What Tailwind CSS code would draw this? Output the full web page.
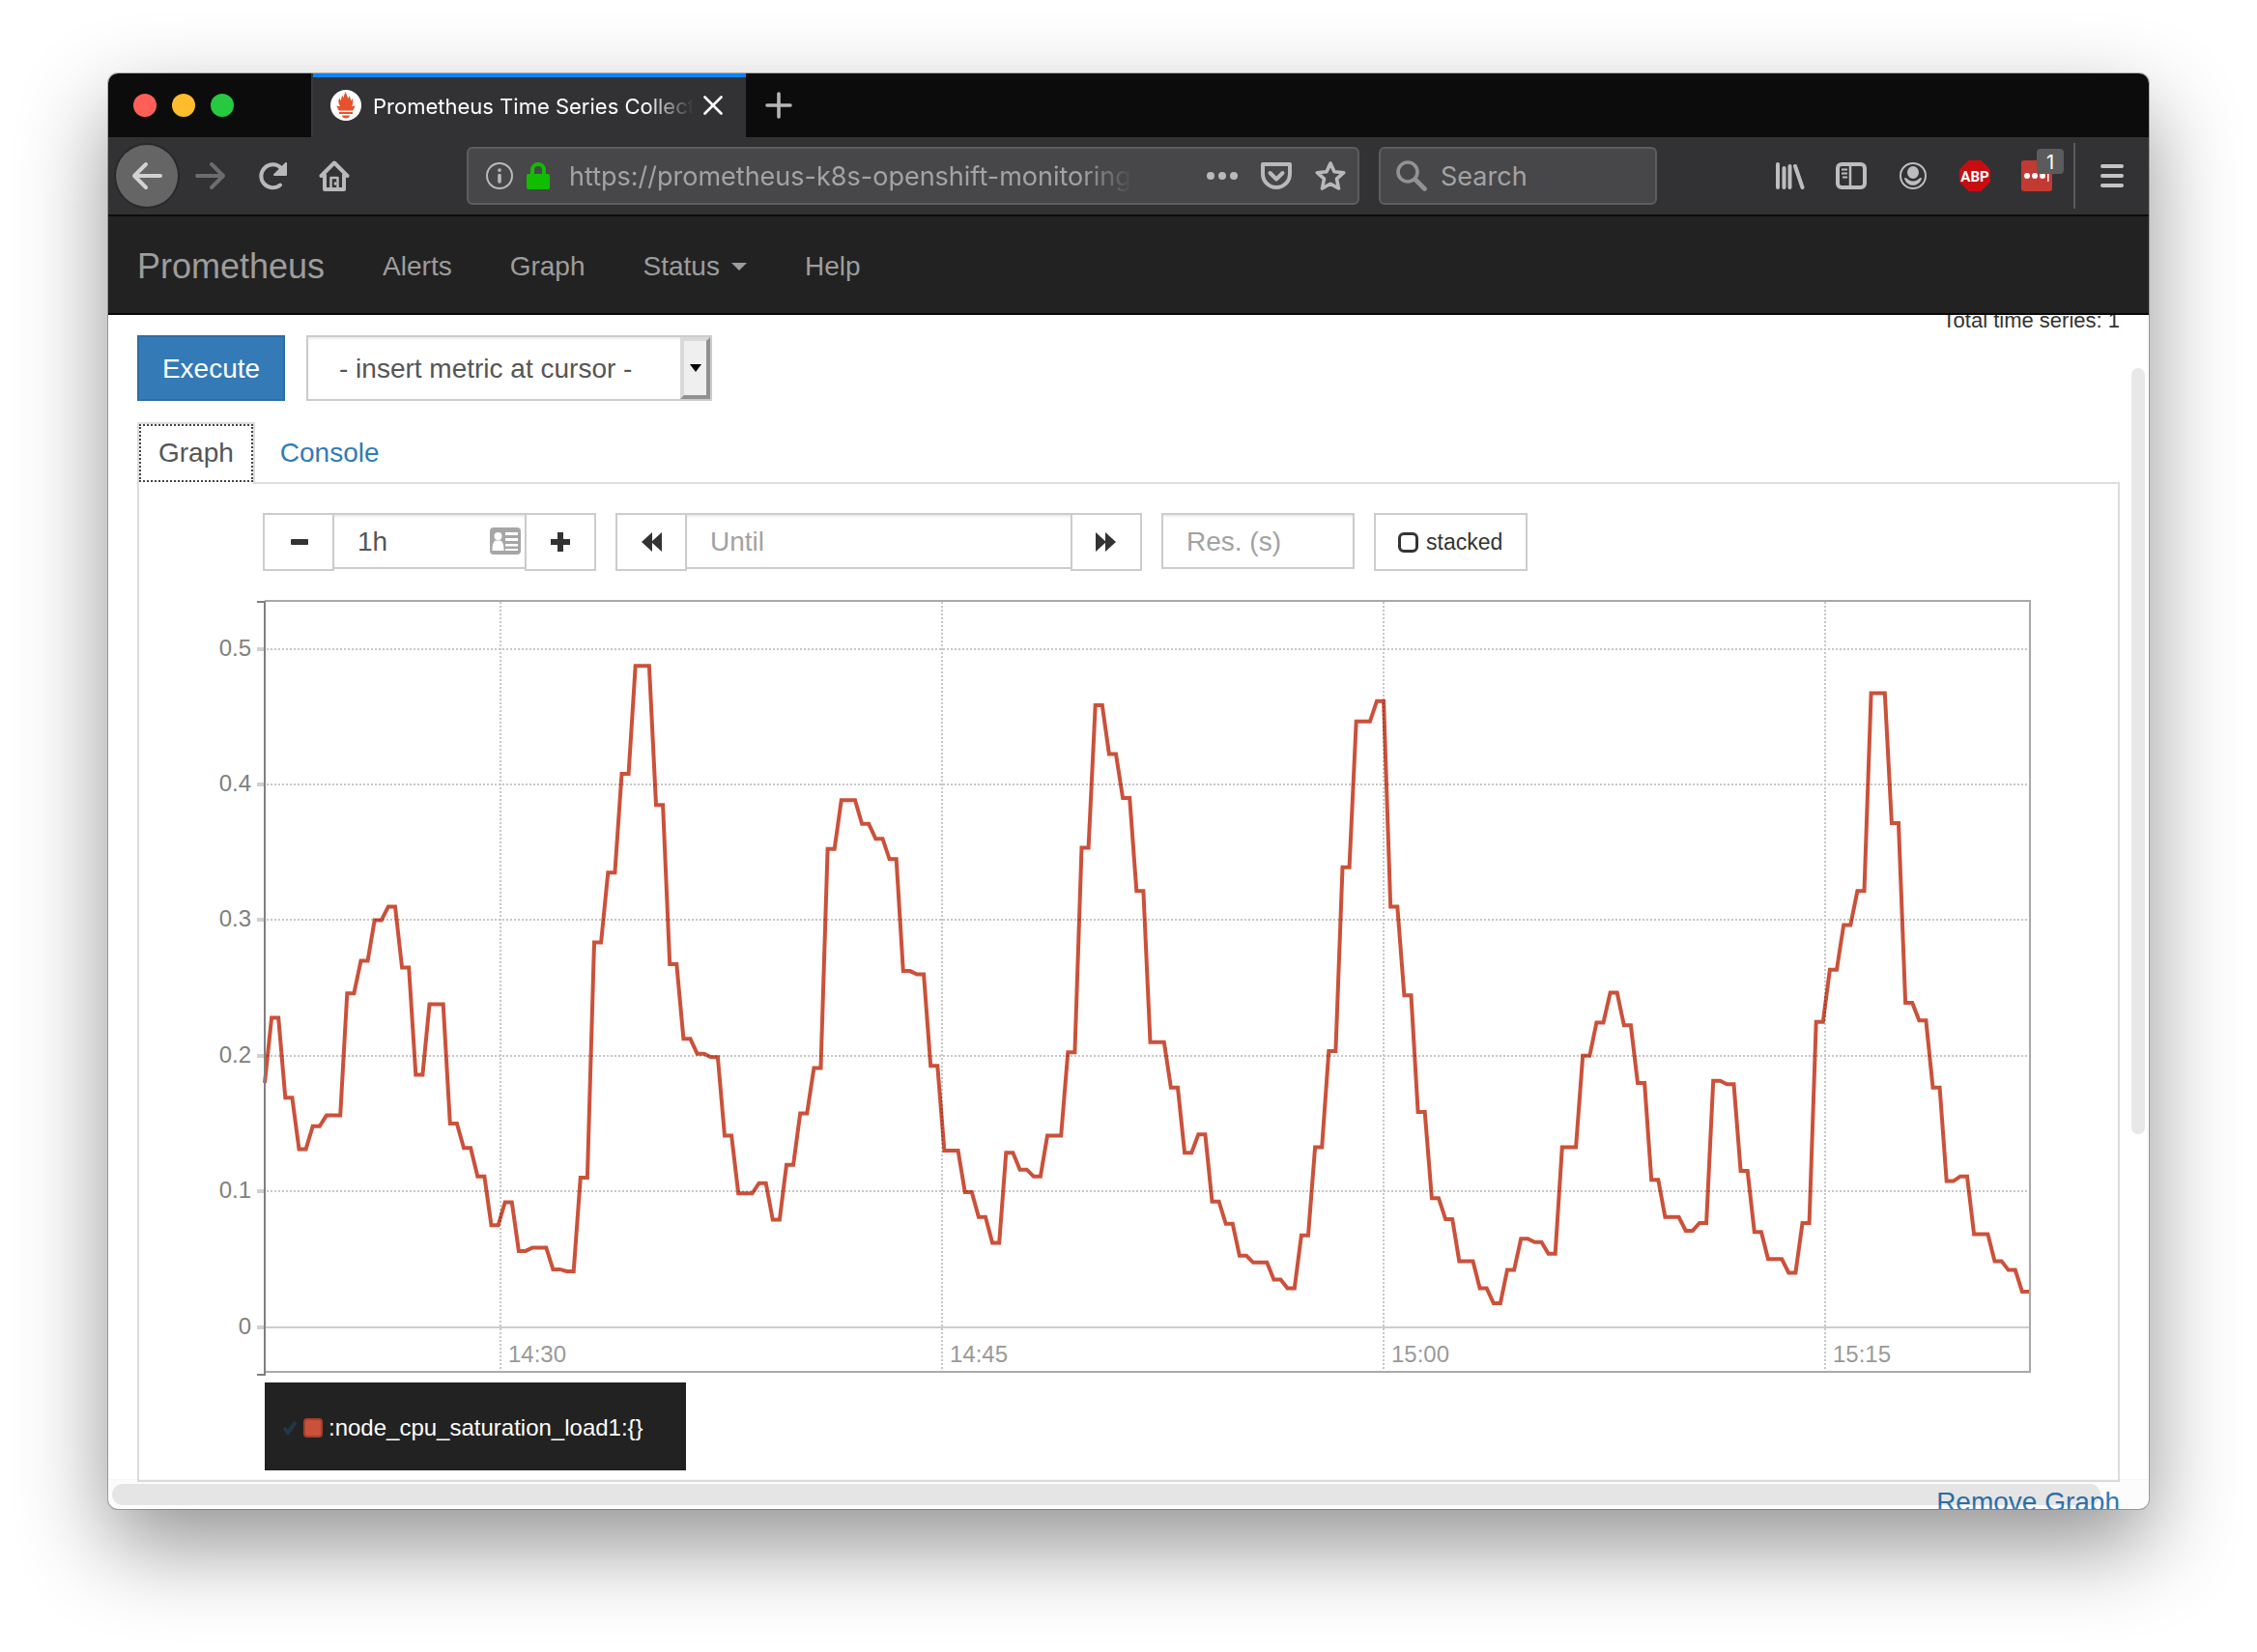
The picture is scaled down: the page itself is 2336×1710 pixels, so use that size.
<!DOCTYPE html>
<html lang="en">
<head>
<meta charset="utf-8">
<title>Prometheus Time Series Collection and Processing Server</title>
<script src="https://cdn.jsdelivr.net/npm/@tailwindcss/browser@4"></script>
</head>
<body class="bg-white overflow-hidden font-['Liberation_Sans',Arial,sans-serif] text-[28px] leading-[40px] text-[#333]">
<div class="px-28 pt-19 pb-37">
<div class="flex h-[calc(100vh-224px)] flex-col overflow-hidden rounded-[10px] bg-white shadow-[0_0_0_1px_rgba(0,0,0,0.25),0_37px_92px_rgba(0,0,0,0.43)]">

  <!-- Tab strip -->
  <div class="flex h-[66px] shrink-0 bg-[#0c0c0c] font-['Inter',sans-serif]">
    <div class="flex w-[210px] items-center gap-4 pl-[26px]">
      <button aria-label="Close window" class="size-6 rounded-full bg-[#ff5f57]"></button>
      <button aria-label="Minimize window" class="size-6 rounded-full bg-[#ffbd2e]"></button>
      <button aria-label="Zoom window" class="size-6 rounded-full bg-[#28c940]"></button>
    </div>
    <div class="flex w-[450px] items-center border-l-2 border-l-[#3a3a3c] bg-[#323234] pl-[18px] shadow-[inset_0_4px_0_#0a84ff]">
      <svg class="size-8 shrink-0" viewBox="0 0 32 32"><circle cx="16" cy="16" r="16" fill="#fff"/><path fill="#e6522c" d="M9 23h14v2H9zM12 26.5h8c0 2-2 3-4 3s-4-1-4-3zM9 21.6C7.500 20 7 18.300 6.300 16.500c1.700.4 2.700.5 3.700.6C8 14 7.700 10.800 9.500 8c.1 1.700.9 2.400 1.500 3.200.2-2.600.4-4 1.500-5.700.1 1.300.6 2.300 1 3 .3-2.600 1-4.500 2.500-6.500 0 3 2 4.700 2.300 7.200.6-.9.8-1.800.7-3C20.800 8 21 9.500 21.300 11.500c.6-.8.9-1.600.8-3 1.900 2.800 1.600 5.800-.1 8.600 1.200-.1 2.300-.3 3.700-.6-.6 1.800-1.400 3.500-2.900 5.100z"/></svg>
      <span class="ml-3 w-[332px] overflow-hidden pt-0.5 whitespace-nowrap text-[22px] leading-8 text-white [mask-image:linear-gradient(to_right,black_85%,transparent)]">Prometheus Time Series Collection</span>
      <button aria-label="Close tab" class="ml-2.5"><svg class="size-5" viewBox="0 0 20 20" stroke="#fff" stroke-width="2.600" stroke-linecap="round"><path d="M1.500 1.500l17 17M18.500 1.500l-17 17"/></svg></button>
    </div>
    <button aria-label="New tab" class="ml-5"><svg class="size-7" viewBox="0 0 28 28" stroke="#b6b6b6" stroke-width="3.600" stroke-linecap="round"><path d="M14 2v24M2 14h24"/></svg></button>
  </div>

  <!-- Toolbar -->
  <div class="flex h-[82px] shrink-0 items-center border-b-2 border-[#0c0c0d] bg-[#323234] pl-2 font-['Inter',sans-serif] text-[#b9b9ba]">
    <button aria-label="Back" class="mr-0.5 flex size-16 items-center justify-center rounded-full bg-[#656566] text-[#d2d2d2] ring-2 ring-[#29292b]"><svg class="size-8" viewBox="0 0 32 32" fill="none" stroke="currentColor" stroke-width="4" stroke-linecap="round" stroke-linejoin="round"><path d="M30 16H3M15 4L3 16l12 12"/></svg></button>
    <button aria-label="Forward" class="flex size-16 items-center justify-center text-[#6c6c6d]"><svg class="size-8" viewBox="0 0 32 32" fill="none" stroke="currentColor" stroke-width="4" stroke-linecap="round" stroke-linejoin="round"><path d="M2 16h27M17 4l12 12-12 12"/></svg></button>
    <button aria-label="Reload" class="flex size-16 items-center justify-center"><svg class="size-8" viewBox="0 0 32 32" fill="none" stroke="currentColor" stroke-width="4" stroke-linecap="round"><path d="M24 25.500A12 12 0 1 1 25 8"/><path fill="currentColor" stroke-width="2" stroke-linejoin="round" d="M30 3v12H18z"/></svg></button>
    <button aria-label="Home" class="flex size-16 items-center justify-center"><svg class="size-8" viewBox="0 0 32 32" fill="none" stroke="currentColor" stroke-width="4" stroke-linecap="round" stroke-linejoin="round"><path d="M2.500 16L16 2.500 29.500 16M6 15v15h20V15"/><path stroke-width="2.500" d="M12.500 29V18h7v11"/><path stroke-width="2.500" d="M17 23.500v1"/></svg></button>
    <div class="ml-[105px] flex h-[60px] min-w-0 flex-1 items-center rounded-md border-2 border-[#5d5d5f] bg-[#474749] pl-[18px]">
      <svg class="size-7 shrink-0" viewBox="0 0 28 28" fill="none" stroke="currentColor" stroke-width="2"><circle cx="14" cy="14" r="13"/><path stroke-width="3.600" stroke-linecap="round" d="M14 13.500V20M14 8v.2"/></svg>
      <svg class="ml-[14px] h-7 w-6 shrink-0" viewBox="0 0 24 28"><path fill="none" stroke="#12bc00" stroke-width="4" d="M6 13V8a6 6 0 0 1 12 0v5"/><rect y="12" width="24" height="16" rx="2" fill="#12bc00"/></svg>
      <input aria-label="Address" value="https://prometheus-k8s-openshift-monitoring.apps" class="ml-5 w-[590px] min-w-0 bg-transparent pt-0.5 text-[27px] leading-9 text-[#a3a3a4] outline-none [mask-image:linear-gradient(to_right,black_90%,transparent_99%)]">
      <div class="ml-auto flex">
        <button aria-label="Page actions" class="flex h-14 w-14 items-center justify-center"><svg class="size-8" viewBox="0 0 32 32" fill="currentColor"><circle cx="4" cy="16" r="4"/><circle cx="16" cy="16" r="4"/><circle cx="28" cy="16" r="4"/></svg></button>
        <button aria-label="Save to Pocket" class="flex h-14 w-14 items-center justify-center"><svg class="size-8" viewBox="0 0 32 32" fill="none" stroke="currentColor" stroke-width="4" stroke-linecap="round" stroke-linejoin="round"><path d="M2 4h28v10a14 14 0 0 1-28 0z"/><path d="M9.500 13l6.500 6.500 6.500-6.500"/></svg></button>
        <button aria-label="Bookmark this page" class="flex h-14 w-14 items-center justify-center"><svg class="size-8" viewBox="0 0 32 32" fill="none" stroke="currentColor" stroke-width="3.600" stroke-linejoin="round"><path d="M16 3l4 8.700 9.700 1-7.200 6.500L24.500 29 16 24.200 7.500 29l2-9.800-7.200-6.500 9.700-1z"/></svg></button>
      </div>
    </div>
    <label class="ml-5 flex h-[60px] w-[288px] items-center rounded-md border-2 border-[#5d5d5f] bg-[#474749] pl-4">
      <svg class="size-8 shrink-0 text-[#929293]" viewBox="0 0 32 32" fill="none" stroke="currentColor" stroke-width="3.600" stroke-linecap="round"><circle cx="12" cy="12" r="10"/><path stroke-width="4.600" d="M20 20l9.500 9.500"/></svg>
      <input type="search" placeholder="Search" aria-label="Search" class="ml-[14px] w-full min-w-0 bg-transparent pt-0.5 text-[27px] leading-9 outline-none placeholder:text-[#a3a3a4]">
    </label>
    <div class="ml-[105px] flex text-[#bdbdbe]">
      <button aria-label="Library" class="flex size-16 items-center justify-center"><svg class="size-8" viewBox="0 0 32 32" fill="none" stroke="currentColor" stroke-width="4" stroke-linecap="round"><path d="M4 4v24M10.500 8v20M16.500 6v22M22 6l7.500 22"/></svg></button>
      <button aria-label="Sidebars" class="flex size-16 items-center justify-center"><svg class="size-8" viewBox="0 0 32 32" fill="none" stroke="currentColor"><rect x="2" y="4" width="28" height="24" rx="4" stroke-width="4"/><path stroke-width="2.500" d="M15 4v24"/><path stroke-width="2" d="M6 9.500h6M6 13.500h6M7 17.500h5"/></svg></button>
      <button aria-label="Account" class="flex size-16 items-center justify-center"><svg class="size-8" viewBox="0 0 32 32" fill="currentColor"><circle cx="16" cy="16" r="13" fill="none" stroke="currentColor" stroke-width="2"/><ellipse cx="16" cy="12.500" rx="6" ry="6.500"/><path d="M7 18c2-.3 3 1 4.500 2.200 2.500 1.800 6.500 1.800 9 0C22 19 23 17.700 25 18c-.5 4.500-4.500 7.800-9 7.800S7.500 22.500 7 18z"/></svg></button>
      <button aria-label="Adblock Plus" class="flex size-16 items-center justify-center"><svg class="size-8" viewBox="0 0 32 32"><path fill="#c70d12" d="M9.500 0h13L32 9.500v13L22.500 32h-13L0 22.500v-13z"/><text x="16" y="22" text-anchor="middle" font-family="Roboto, sans-serif" font-weight="700" font-size="15" fill="#fff">ABP</text></svg></button>
      <button aria-label="Password manager" class="relative flex size-16 items-center justify-center"><svg class="size-8" viewBox="0 0 32 32"><rect width="32" height="32" rx="3" fill="#c23a32"/><g fill="#fff"><circle cx="6" cy="16" r="3"/><circle cx="14" cy="16" r="3"/><circle cx="22" cy="16" r="3"/><path d="M27 12h1.500v10H27z"/></g></svg><span class="absolute left-8 top-1 h-[26px] w-7 rounded-sm bg-[#5b5b5d] text-center text-[20px] leading-7 text-white">1</span></button>
    </div>
    <div class="ml-1.5 h-[68px] w-0.5 bg-[#5b5b5d]"></div>
    <button aria-label="Menu" class="mr-[26px] ml-[26px]"><svg class="size-6" viewBox="0 0 24 24" stroke="#c4c4c5" stroke-width="4" stroke-linecap="round"><path d="M2 2h20M2 12h20M2 22h20"/></svg></button>
  </div>

  <!-- Site navigation -->
  <nav class="flex h-[102px] shrink-0 items-center gap-[60px] border-b-2 border-[#080808] bg-[#222] px-[30px] pt-1 text-[#9d9d9d]">
    <a href="#" class="text-[36px]">Prometheus</a>
    <a href="#">Alerts</a>
    <a href="#">Graph</a>
    <a href="#" class="flex items-center gap-3">Status <svg class="h-2 w-4" viewBox="0 0 16 8" fill="currentColor"><path d="M0 0h16l-8 8z"/></svg></a>
    <a href="#">Help</a>
  </nav>

  <!-- Page -->
  <main class="relative min-h-0 flex-1 overflow-hidden px-[30px]">
    <div class="-mt-[9px] text-right text-[22px] leading-[30px]">Total time series: 1</div>
    <div class="flex gap-[22px]">
      <button class="h-[68px] w-[153px] border-2 border-[#2e6da4] bg-[#337ab7] pt-0.5 text-white">Execute</button>
      <div class="relative w-[420px]">
        <select aria-label="Insert metric" class="h-[68px] w-full appearance-none border-2 border-[#ccc] bg-white pt-0.5 pl-8 text-[#555] shadow-[inset_0_2px_2px_rgba(0,0,0,0.075)]"><option>- insert metric at cursor -</option></select>
        <div class="pointer-events-none absolute inset-y-0.5 right-0.5 flex w-[31px] items-center justify-center border-4 border-t-[#d9d9d9] border-r-[#919191] border-b-[#919191] border-l-[#d9d9d9] bg-[#efefef]"><svg class="h-2 w-3" viewBox="0 0 12 8"><path d="M0 0h12L6 8z"/></svg></div>
      </div>
    </div>

    <div class="mt-[22px] flex h-16 gap-1 border-b-2 border-[#ddd]">
      <a href="#" class="-mb-0.5 h-16 border-2 border-b-0 border-[#ddd] bg-white px-5 pt-2.5 text-[#555] outline-2 -outline-offset-4 outline-dotted outline-[#444]">Graph</a>
      <a href="#" class="px-[22px] pt-3 text-[#337ab7]">Console</a>
    </div>

    <div class="border-2 border-t-0 border-[#ddd] pt-[30px] pb-2.5">
      <div class="flex items-start gap-5 pl-32">
        <div class="flex items-start">
          <button aria-label="Shrink range" class="flex h-[60px] w-[74px] items-center justify-center border-2 border-[#ccc]"><svg class="size-6" viewBox="0 0 24 24"><rect x="4" y="9" width="18" height="6" rx="1" fill="#333"/></svg></button>
          <div class="relative -mx-0.5">
            <input aria-label="Range" value="1h" class="h-[58px] w-[201px] border-2 border-[#ccc] pt-0.5 pl-6 text-[#555] shadow-[inset_0_2px_2px_rgba(0,0,0,0.075)]">
            <svg class="absolute top-[15px] right-1.5 h-7 w-8" viewBox="0 0 32 28"><rect width="32" height="28" rx="4" fill="#a6a6a6"/><g fill="#fff"><circle cx="8.500" cy="9" r="4"/><path d="M2.500 24c0-6 1-9.500 3.500-10.500h5c2.500 1 3.500 4.500 3.500 10.500zM16 5h13v3H16zM16 11h13v3H16zM16 17h13v2.500H16zM16 22h13v2H16z"/></g></svg>
          </div>
          <button aria-label="Grow range" class="relative flex h-[60px] w-[74px] items-center justify-center border-2 border-[#ccc] bg-white"><svg class="size-6" viewBox="0 0 24 24" fill="#333"><path d="M9 2h6v7h7v6h-7v7H9v-7H2V9h7z"/></svg></button>
        </div>
        <div class="flex items-start">
          <button aria-label="Rewind end time" class="flex h-[60px] w-[74px] items-center justify-center border-2 border-[#ccc]"><svg class="size-6" viewBox="0 0 24 24" fill="#333"><path d="M13 2v20L2 12zM23 2v20L12 12z"/></svg></button>
          <input aria-label="Until" placeholder="Until" class="-mx-0.5 h-[58px] w-[401px] border-2 border-[#ccc] pt-0.5 pl-6 shadow-[inset_0_2px_2px_rgba(0,0,0,0.075)] placeholder:text-[#a2a2a2]">
          <button aria-label="Advance end time" class="relative flex h-[60px] w-[74px] items-center justify-center border-2 border-[#ccc] bg-white"><svg class="size-6" viewBox="0 0 24 24" fill="#333"><path d="M1 2v20l11-10zM11 2v20l11-10z"/></svg></button>
        </div>
        <input aria-label="Resolution in seconds" placeholder="Res. (s)" class="h-[58px] w-[200px] border-2 border-[#ccc] pt-0.5 pl-6 shadow-[inset_0_2px_2px_rgba(0,0,0,0.075)] placeholder:text-[#a2a2a2]">
        <label class="flex h-[60px] w-[159px] items-center gap-2 border-2 border-[#ccc] pl-[23px] text-[23px]"><input type="checkbox" class="size-[21px] appearance-none rounded-md border-[3px] border-[#333]">stacked</label>
      </div>

      <div class="mt-[27px] pr-[88px] pl-[70px]">
        <svg id="chart" class="block h-auto w-full" viewBox="0 0 1890 808" font-family="Liberation Sans, Arial, sans-serif" font-size="24">
          <path id="series" fill="none" stroke="#cb513a" stroke-width="4"/>
          <g stroke="#000" stroke-opacity=".22" stroke-width="2">
            <path stroke-dasharray="2 2" d="M62 54H1886M62 194H1886M62 334H1886M62 475H1886M62 615H1886M304 5V802M761 5V802M1218 5V802M1675 5V802"/>
            <path stroke-opacity=".2" d="M61 756H1886"/>
            <path stroke-opacity=".18" stroke-width="4" d="M52 54h8M52 194h8M52 334h8M52 475h8M52 615h8M52 756h8"/>
          </g>
          <path fill="none" stroke="#a9a9a9" stroke-width="2" d="M60 4H1887V802H60"/>
          <path fill="none" stroke="#7f7f7f" stroke-width="2" d="M52 5H60V805H52"/>
          <g fill="#808080" text-anchor="end"><text x="46" y="61">0.5</text><text x="46" y="201">0.4</text><text x="46" y="341">0.3</text><text x="46" y="482">0.2</text><text x="46" y="622">0.1</text><text x="46" y="763">0</text></g>
          <g fill="#999"><text x="312" y="792">14:30</text><text x="769" y="792">14:45</text><text x="1226" y="792">15:00</text><text x="1683" y="792">15:15</text></g>
        </svg>
      </div>

      <div class="mt-[5px] ml-[130px] flex h-[91px] w-[436px] items-center bg-[#222] pt-0.5 pl-[18px] text-[24px] text-white">
        <svg class="h-4 w-4" viewBox="0 0 16 16" fill="none" stroke="#22364a" stroke-width="4"><path d="M2 8l4 5 8-11"/></svg>
        <span class="ml-1.5 size-5 rounded-sm border-2 border-[#a2412e] bg-[#cb513a]"></span>
        <a href="#" class="ml-1.5">:node_cpu_saturation_load1:{}</a>
      </div>
    </div>
    <div class="mt-px text-right"><a href="#" class="text-[#337ab7]">Remove Graph</a></div>

    <!-- Overlay scrollbars -->
    <div class="absolute inset-x-0 bottom-0 h-[31px] border-t border-black/2 bg-black/1"></div>
    <div class="absolute right-[50px] bottom-1 left-1 h-[22px] rounded-full bg-black/9"></div>
    <div class="absolute top-[55px] right-1 h-[793px] w-[14px] rounded-full bg-[#e8e8e8]"></div>
  </main>
</div>
</div>

<script>
// Samples of the one-hour range in thousandths, as [value, number of 14 s steps]; the count is 2 when left out.
const runs = [[180,1],228,169,131,148,[156,3],246,270,300,310,265,186,[238,3],150,132,111,75,92,56,[58.5,3],42.5,41,110,283.5,335,408,[487.5,3],385,267.5,212.5,
201.5,199,141,[98.5,3],106,79,119.5,157.5,191,352.5,[388.5,3],371,360,345,262.5,260,192.5,[130,3],99.5,81,62,128.5,116,111,[141,3],202.5,353.5,458.5,422.5,390,321.5,[210,3],176.5,
128.5,142,92.5,76,52.5,[47.5,3],35,28.5,67.5,132.5,203.5,339,[446.5,3],461.5,310,244.5,158.5,95,79.5,[48.5,3],28.5,17.5,42,65,62.5,54,[132.5,3],200,224.5,246.5,222.5,180,
108.5,[81,3],71,76.5,181.5,179,115,70,[50,3],40,76.5,225,263.5,296.5,321.5,[467.5,3],371.5,239,226,176.5,107.5,111,[68.5,3],48.5,42,26];
const values = runs.flatMap(r => Array.isArray(r) ? Array(r[1]).fill(r[0]) : [r, r]);
document.getElementById('series').setAttribute('d', 'M' + values.map((v, i) =>
  (60 + i * 7.105).toFixed(1) + ' ' + (755.5 - v * 1.4035).toFixed(1)).join('L'));
</script>
</body>
</html>
